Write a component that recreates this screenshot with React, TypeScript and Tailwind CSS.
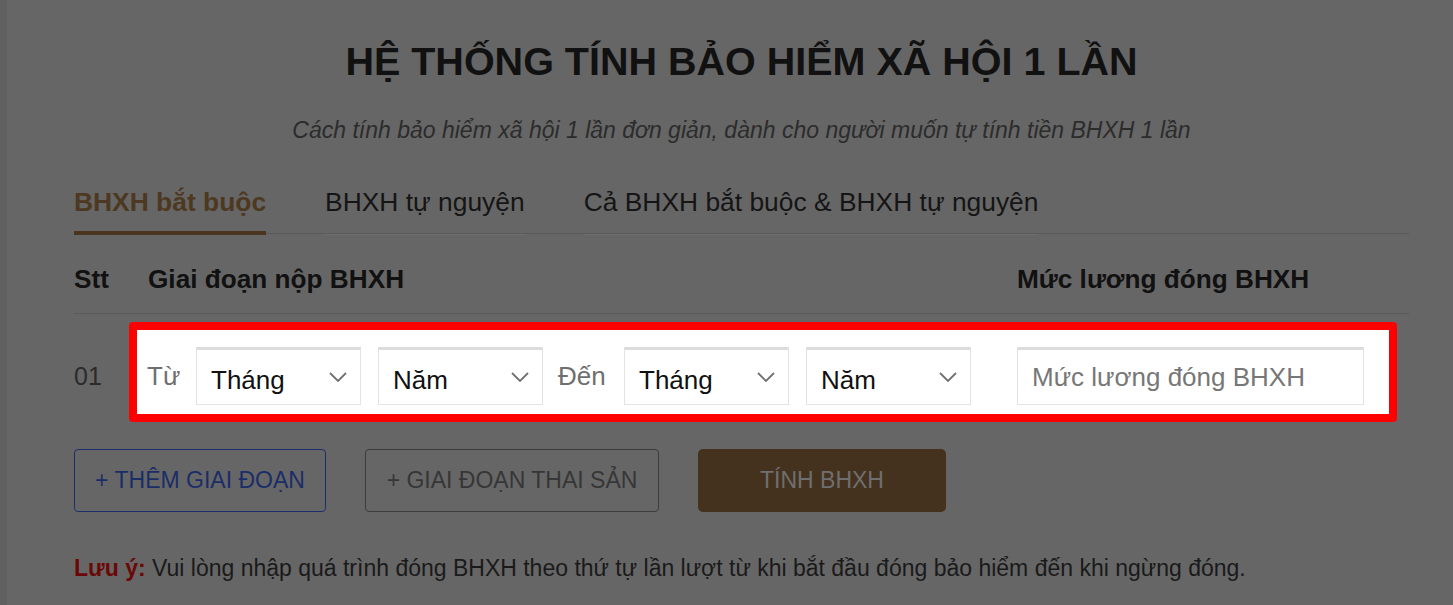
import React from "react";

const font = { fontFamily: '"Liberation Sans", Arial, sans-serif' };

function Chevron() {
  return (
    <svg width="18" height="10" viewBox="0 0 18 10" fill="none">
      <polyline points="1,1 9,9 17,1" stroke="#707070" strokeWidth="1.8" fill="none" />
    </svg>
  );
}

function Select({ label, ml = "" }: { label: string; ml?: string }) {
  return (
    <div
      className={`flex h-[58px] w-[165px] shrink-0 items-center justify-between border border-[#e3e3e3] border-t-[3px] border-t-[#dcdcdc] bg-white pl-[14px] pr-[13px] ${ml}`}
    >
      <span className="pt-[5px] text-[26px] leading-[30px] text-[#111]">{label}</span>
      <Chevron />
    </div>
  );
}

export default function App() {
  return (
    <div className="flex min-h-screen w-full bg-[#666666]" style={font}>
      <div className="w-[7px] shrink-0 bg-[#616161]" />
      <div className="ml-[67px] w-[1335px] shrink-0">
        <h1 className="pt-[37px] text-center text-[39.5px] font-bold leading-[48px] text-[#111]">
          HỆ THỐNG TÍNH BẢO HIỂM XÃ HỘI 1 LẦN
        </h1>
        <p className="mt-[30px] text-center text-[23px] italic leading-[30px] text-[#2c2c2c]">
          Cách tính bảo hiểm xã hội 1 lần đơn giản, dành cho người muốn tự tính tiền BHXH 1 lần
        </p>

        <div className="mt-[42px] flex gap-[59px] border-b border-[#5a5a5a]">
          <div className="-mb-[2px] border-b-4 border-[#4a3520] pb-[14px] text-[26.4px] font-bold leading-[30px] text-[#4d3921]">
            BHXH bắt buộc
          </div>
          <div className="-mb-[2px] border-b border-[#6e6e6e] pb-[15px] text-[26.4px] leading-[30px] text-[#151515]">
            BHXH tự nguyện
          </div>
          <div className="-mb-[2px] border-b border-[#6e6e6e] pb-[15px] text-[26.4px] leading-[30px] text-[#151515]">
            Cả BHXH bắt buộc &amp; BHXH tự nguyện
          </div>
        </div>

        <div className="mt-[30px] grid grid-cols-[74px_869px_1fr] border-b border-[#5a5a5a] pb-[19px] text-[26.2px] font-bold leading-[30px] text-[#111]">
          <div>Stt</div>
          <div>Giai đoạn nộp BHXH</div>
          <div>Mức lương đóng BHXH</div>
        </div>

        <div className="mt-[8px] flex items-center">
          <div className="w-[55px] shrink-0 pt-[8px] text-[25px] leading-[30px] text-[#2b2b2b]">01</div>
          <div className="h-[100px] w-[1268px] shrink-0 rounded-[4px] border-8 border-[#ff0000] bg-white pb-[9px] pl-[10px] pt-[17px]">
            <div className="flex h-full items-center">
              <span className="w-[49px] shrink-0 text-[26px] leading-[30px] text-[#6f6f6f]">Từ</span>
              <Select label="Tháng" />
              <Select label="Năm" ml="ml-[17px]" />
              <span className="ml-[15px] w-[66px] shrink-0 text-[26px] leading-[30px] text-[#6f6f6f]">Đến</span>
              <Select label="Tháng" />
              <Select label="Năm" ml="ml-[17px]" />
              <input
                className="ml-[46px] h-[58px] w-[347px] shrink-0 border border-[#e3e3e3] border-t-[3px] border-t-[#dcdcdc] bg-white px-[14px] text-[26px] text-[#111] outline-none placeholder:text-[#777]"
                style={font}
                placeholder="Mức lương đóng BHXH"
              />
            </div>
          </div>
        </div>

        <div className="mt-[27px] flex gap-[39px]">
          <button className="flex h-[63px] w-[252px] items-center justify-center rounded-[4px] border border-[#1d2f6a] text-[23px] text-[#1b2d68]" style={font}>
            + THÊM GIAI ĐOẠN
          </button>
          <button className="flex h-[63px] w-[294px] items-center justify-center rounded-[4px] border border-[#3d3d3d] text-[23px] text-[#363636]" style={font}>
            + GIAI ĐOẠN THAI SẢN
          </button>
          <button className="flex h-[63px] w-[248px] items-center justify-center rounded-[5px] bg-[#45321e] text-[23px] text-[#6f6f6f]" style={font}>
            TÍNH BHXH
          </button>
        </div>

        <p className="mt-[42px] text-[23px] leading-[28px] text-[#1a1a1a]">
          <span className="font-bold text-[#6a0808]">Lưu ý:</span> Vui lòng nhập quá trình đóng BHXH theo thứ tự lần lượt từ khi bắt đầu đóng bảo hiểm đến khi ngừng đóng.
        </p>
      </div>
    </div>
  );
}
